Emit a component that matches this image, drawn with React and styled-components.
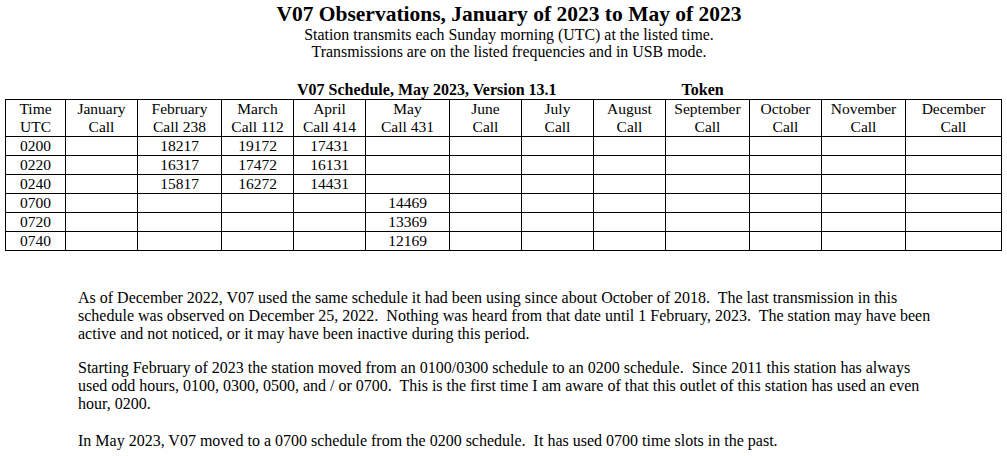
import styled, { createGlobalStyle } from "styled-components";

const GlobalStyle = createGlobalStyle`
    body {
        margin: 0;
        background: #ffffff;
        color: #000000;
        font-family: "Liberation Serif", "Times New Roman", serif;
    }
`

const Page = styled.div`
    width: 1007px;
    height: 456px;
    overflow: hidden;
    box-sizing: border-box;
    padding: 3px 5px 0 5px;
`

const Header = styled.div`
    text-align: center;
    padding-left: 11px;
`

const Title = styled.h1`
    margin: 0;
    font-size: 21.5px;
    line-height: 23px;
    font-weight: bold;
`

const Subtitle = styled.p`
    margin: 0;
    font-size: 15.9px;
    line-height: 17px;
`

const CaptionRow = styled.div`
    display: flex;
    margin-top: 21px;
    font-size: 16px;
    line-height: 18px;
    font-weight: bold;
`

const Caption = styled.span`
    margin-left: ${props => props.$offset}px;
`

const Table = styled.table`
    border-collapse: collapse;
    table-layout: fixed;
    width: 996px;
    font-size: 15.5px;
    line-height: 18px;
`

const Head = styled.th`
    font-weight: normal;
    border: 1px solid #000;
    padding: 0;
    height: 36px;
    text-align: center;
    vertical-align: middle;
`

const Cell = styled.td`
    border: 1px solid #000;
    padding: 0;
    height: 18px;
    text-align: center;
`

const TimeCell = styled.td`
    border: 1px solid #000;
    height: 18px;
    padding: 0 0 0 14px;
    text-align: left;
`

const Notes = styled.div`
    margin: 38px 0 0 73px;
    width: 862px;
    font-size: 16px;
    line-height: 18px;
`

const Note = styled.p`
    margin: 0 0 16px 0;

    &:last-child {
        margin-top: 19px;
    }
`

const widths = [60, 72, 84, 72, 72, 84, 72, 72, 72, 84, 72, 84, 96]

const headers = [
    ["Time", "UTC"],
    ["January", "Call"],
    ["February", "Call 238"],
    ["March", "Call 112"],
    ["April", "Call 414"],
    ["May", "Call 431"],
    ["June", "Call"],
    ["July", "Call"],
    ["August", "Call"],
    ["September", "Call"],
    ["October", "Call"],
    ["November", "Call"],
    ["December", "Call"],
]

const rows = [
    ["0200", "", "18217", "19172", "17431"],
    ["0220", "", "16317", "17472", "16131"],
    ["0240", "", "15817", "16272", "14431"],
    ["0700", "", "", "", "", "14469"],
    ["0720", "", "", "", "", "13369"],
    ["0740", "", "", "", "", "12169"],
]

function App() {
    return (
        <Page>
            <GlobalStyle />
            <Header>
                <Title>V07 Observations, January of 2023 to May of 2023</Title>
                <Subtitle>Station transmits each Sunday morning (UTC) at the listed time.</Subtitle>
                <Subtitle>Transmissions are on the listed frequencies and in USB mode.</Subtitle>
            </Header>
            <CaptionRow>
                <Caption $offset={292}>V07 Schedule, May 2023, Version 13.1</Caption>
                <Caption $offset={125}>Token</Caption>
            </CaptionRow>
            <Table>
                <colgroup>
                    {widths.map((w, i) => <col key={i} style={{ width: w }} />)}
                </colgroup>
                <thead>
                    <tr>
                        {headers.map(([a, b]) => (
                            <Head key={a}>{a}<br />{b}</Head>
                        ))}
                    </tr>
                </thead>
                <tbody>
                    {rows.map(row => (
                        <tr key={row[0]}>
                            <TimeCell>{row[0]}</TimeCell>
                            {widths.slice(1).map((_, i) => <Cell key={i}>{row[i + 1] || ""}</Cell>)}
                        </tr>
                    ))}
                </tbody>
            </Table>
            <Notes>
                <Note>
                    As of December 2022, V07 used the same schedule it had been using since about October of 2018.&nbsp; The last transmission in this schedule was observed on December 25, 2022.&nbsp; Nothing was heard from that date until 1 February, 2023.&nbsp; The station may have been active and not noticed, or it may have been inactive during this period.
                </Note>
                <Note>
                    Starting February of 2023 the station moved from an 0100/0300 schedule to an 0200 schedule.&nbsp; Since 2011 this station has always used odd hours, 0100, 0300, 0500, and / or 0700.&nbsp; This is the first time I am aware of that this outlet of this station has used an even hour, 0200.
                </Note>
                <Note>
                    In May 2023, V07 moved to a 0700 schedule from the 0200 schedule.&nbsp; It has used 0700 time slots in the past.
                </Note>
            </Notes>
        </Page>
    )
}

export default App
